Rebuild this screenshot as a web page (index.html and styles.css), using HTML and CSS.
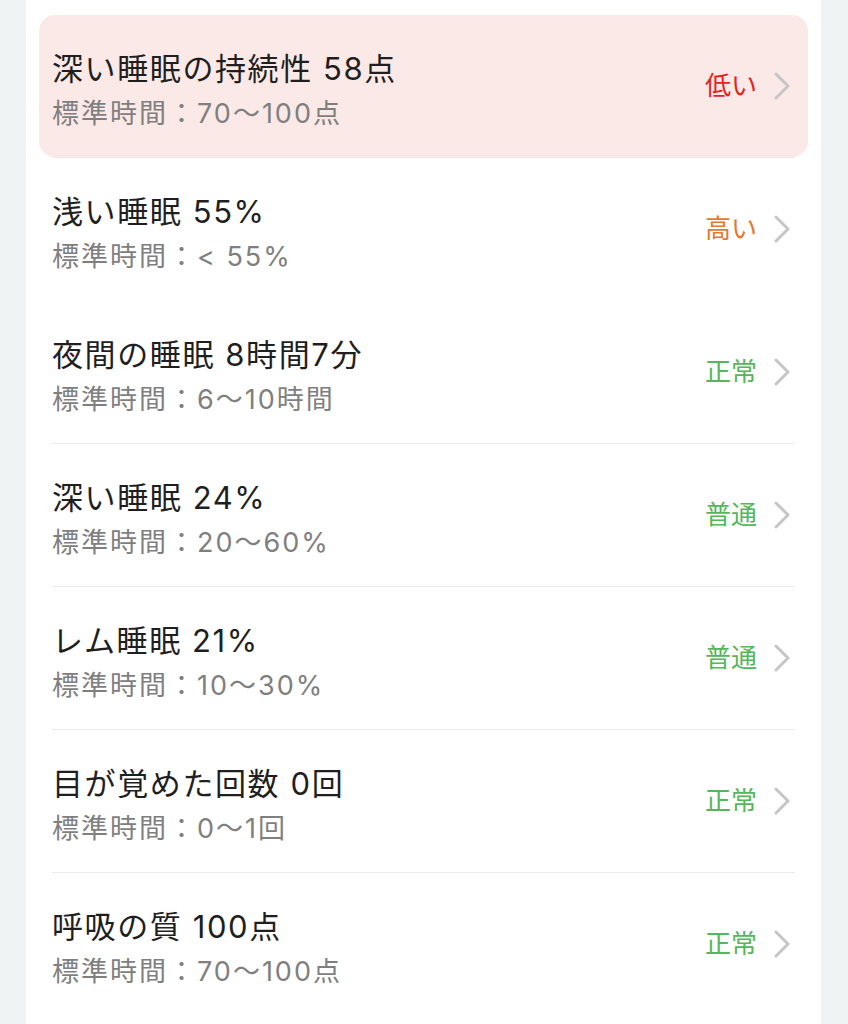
FILE: index.html
```html
<!DOCTYPE html>
<html lang="ja">
<head>
<meta charset="utf-8">
<link rel="stylesheet" href="styles.css">
</head>
<body>
<div class="card">
  <div class="list">
    <div class="item alert">
      <div class="text">
        <div class="title">深い睡眠の持続性 58点</div>
        <div class="sub">標準時間：70〜100点</div>
      </div>
      <div class="status low">低い</div>
      <svg class="chev" viewBox="0 0 16 28"><path d="M2 2 L14 14 L2 26"/></svg>
    </div>
    <div class="sep"></div>
    <div class="item">
      <div class="text">
        <div class="title">浅い睡眠 55%</div>
        <div class="sub">標準時間：&lt; 55%</div>
      </div>
      <div class="status high">高い</div>
      <svg class="chev" viewBox="0 0 16 28"><path d="M2 2 L14 14 L2 26"/></svg>
    </div>
    <div class="sep hidden"></div>
    <div class="item">
      <div class="text">
        <div class="title">夜間の睡眠 8時間7分</div>
        <div class="sub">標準時間：6〜10時間</div>
      </div>
      <div class="status ok">正常</div>
      <svg class="chev" viewBox="0 0 16 28"><path d="M2 2 L14 14 L2 26"/></svg>
    </div>
    <div class="sep"></div>
    <div class="item">
      <div class="text">
        <div class="title">深い睡眠 24%</div>
        <div class="sub">標準時間：20〜60%</div>
      </div>
      <div class="status ok">普通</div>
      <svg class="chev" viewBox="0 0 16 28"><path d="M2 2 L14 14 L2 26"/></svg>
    </div>
    <div class="sep"></div>
    <div class="item">
      <div class="text">
        <div class="title">レム睡眠 21%</div>
        <div class="sub">標準時間：10〜30%</div>
      </div>
      <div class="status ok">普通</div>
      <svg class="chev" viewBox="0 0 16 28"><path d="M2 2 L14 14 L2 26"/></svg>
    </div>
    <div class="sep"></div>
    <div class="item">
      <div class="text">
        <div class="title">目が覚めた回数 0回</div>
        <div class="sub">標準時間：0〜1回</div>
      </div>
      <div class="status ok">正常</div>
      <svg class="chev" viewBox="0 0 16 28"><path d="M2 2 L14 14 L2 26"/></svg>
    </div>
    <div class="sep"></div>
    <div class="item">
      <div class="text">
        <div class="title">呼吸の質 100点</div>
        <div class="sub">標準時間：70〜100点</div>
      </div>
      <div class="status ok">正常</div>
      <svg class="chev" viewBox="0 0 16 28"><path d="M2 2 L14 14 L2 26"/></svg>
    </div>
  </div>
</div>
</body>
</html>
```

FILE: styles.css
```css
html, body {
  margin: 0;
  padding: 0;
}
body {
  background: #eff3f4;
  font-family: "Inter", "Noto Sans CJK JP", sans-serif;
  width: 848px;
  height: 1024px;
  overflow: hidden;
}
.card {
  margin-left: 26px;
  width: 795px;
  min-height: 1024px;
  background: #ffffff;
}
.list {
  padding: 15px 13px 0;
  display: flex;
  flex-direction: column;
}
.item {
  height: 142px;
  box-sizing: border-box;
  padding: 0 18px 0 13px;
  display: flex;
  align-items: center;
  border-radius: 16px;
}
.item.alert {
  background: #fbe9e7;
}
.text {
  flex: 1;
  align-self: flex-start;
  padding-top: 32px;
}
.title {
  font-size: 31px;
  line-height: 44px;
  font-weight: 400;
  letter-spacing: 1.6px;
  color: #1f1f1f;
}
.sub {
  font-size: 27px;
  line-height: 46px;
  letter-spacing: 2px;
  color: #7f7f7f;
}
.status {
  font-size: 26px;
  line-height: 30px;
  margin-right: 17px;
}
.status.low { color: #e5231b; }
.status.high { color: #e5782f; }
.status.ok { color: #55b65a; }
.chev {
  width: 16px;
  height: 28px;
  flex: none;
}
.chev path {
  fill: none;
  stroke: #c6c6c6;
  stroke-width: 3;
  stroke-linecap: round;
  stroke-linejoin: round;
}
.sep {
  height: 1px;
  margin: 0 13px;
  background: #ebebeb;
}
.sep.hidden {
  background: transparent;
}
```
